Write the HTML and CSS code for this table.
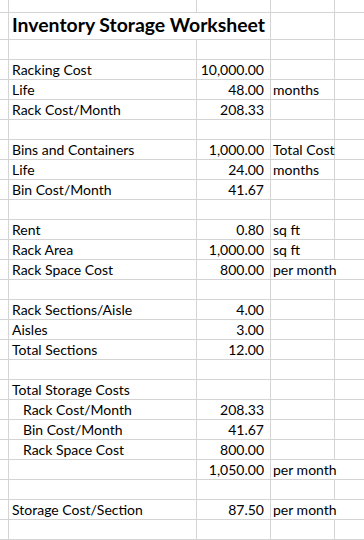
FILE: index.html
```html
<!DOCTYPE html>
<html>
<head>
<meta charset="utf-8">
<link rel="stylesheet" href="styles.css">
</head>
<body>
<div class="sheet">
  <div class="row top"><div class="c c0"></div><div class="c ca"></div><div class="c cb"></div><div class="c cc"></div><div class="c cd"></div></div>
  <div class="row title"><div class="c c0"></div><div class="c ca over"><span class="ttl">Inventory Storage Worksheet</span></div><div class="c cb"></div><div class="c cc"></div><div class="c cd"></div></div>

  <div class="row"><div class="c c0"></div><div class="c ca"></div><div class="c cb"></div><div class="c cc"></div><div class="c cd"></div></div>
  <div class="row"><div class="c c0"></div><div class="c ca">Racking Cost</div><div class="c cb">10,000.00</div><div class="c cc"></div><div class="c cd"></div></div>
  <div class="row"><div class="c c0"></div><div class="c ca">Life</div><div class="c cb">48.00</div><div class="c cc">months</div><div class="c cd"></div></div>
  <div class="row"><div class="c c0"></div><div class="c ca">Rack Cost/Month</div><div class="c cb">208.33</div><div class="c cc"></div><div class="c cd"></div></div>
  <div class="row"><div class="c c0"></div><div class="c ca"></div><div class="c cb"></div><div class="c cc"></div><div class="c cd"></div></div>

  <div class="row"><div class="c c0"></div><div class="c ca">Bins and Containers</div><div class="c cb">1,000.00</div><div class="c cc">Total Cost</div><div class="c cd"></div></div>
  <div class="row"><div class="c c0"></div><div class="c ca">Life</div><div class="c cb">24.00</div><div class="c cc">months</div><div class="c cd"></div></div>
  <div class="row"><div class="c c0"></div><div class="c ca">Bin Cost/Month</div><div class="c cb">41.67</div><div class="c cc"></div><div class="c cd"></div></div>
  <div class="row"><div class="c c0"></div><div class="c ca"></div><div class="c cb"></div><div class="c cc"></div><div class="c cd"></div></div>

  <div class="row"><div class="c c0"></div><div class="c ca">Rent</div><div class="c cb">0.80</div><div class="c cc">sq ft</div><div class="c cd"></div></div>
  <div class="row"><div class="c c0"></div><div class="c ca">Rack Area</div><div class="c cb">1,000.00</div><div class="c cc">sq ft</div><div class="c cd"></div></div>
  <div class="row"><div class="c c0"></div><div class="c ca">Rack Space Cost</div><div class="c cb">800.00</div><div class="c cc over">per month</div><div class="c cd"></div></div>
  <div class="row"><div class="c c0"></div><div class="c ca"></div><div class="c cb"></div><div class="c cc"></div><div class="c cd"></div></div>

  <div class="row"><div class="c c0"></div><div class="c ca">Rack Sections/Aisle</div><div class="c cb">4.00</div><div class="c cc"></div><div class="c cd"></div></div>
  <div class="row"><div class="c c0"></div><div class="c ca">Aisles</div><div class="c cb">3.00</div><div class="c cc"></div><div class="c cd"></div></div>
  <div class="row"><div class="c c0"></div><div class="c ca">Total Sections</div><div class="c cb">12.00</div><div class="c cc"></div><div class="c cd"></div></div>
  <div class="row"><div class="c c0"></div><div class="c ca"></div><div class="c cb"></div><div class="c cc"></div><div class="c cd"></div></div>

  <div class="row"><div class="c c0"></div><div class="c ca">Total Storage Costs</div><div class="c cb"></div><div class="c cc"></div><div class="c cd"></div></div>
  <div class="row"><div class="c c0"></div><div class="c ca ind">Rack Cost/Month</div><div class="c cb">208.33</div><div class="c cc"></div><div class="c cd"></div></div>
  <div class="row"><div class="c c0"></div><div class="c ca ind">Bin Cost/Month</div><div class="c cb">41.67</div><div class="c cc"></div><div class="c cd"></div></div>
  <div class="row"><div class="c c0"></div><div class="c ca ind">Rack Space Cost</div><div class="c cb">800.00</div><div class="c cc"></div><div class="c cd"></div></div>
  <div class="row"><div class="c c0"></div><div class="c ca"></div><div class="c cb">1,050.00</div><div class="c cc over">per month</div><div class="c cd"></div></div>
  <div class="row"><div class="c c0"></div><div class="c ca"></div><div class="c cb"></div><div class="c cc"></div><div class="c cd"></div></div>

  <div class="row"><div class="c c0"></div><div class="c ca">Storage Cost/Section</div><div class="c cb">87.50</div><div class="c cc over">per month</div><div class="c cd"></div></div>
  <div class="row"><div class="c c0"></div><div class="c ca"></div><div class="c cb"></div><div class="c cc"></div><div class="c cd"></div></div>
</div>
</body>
</html>
```

FILE: styles.css
```css
html, body {
  margin: 0;
  padding: 0;
  background: #ffffff;
}
.sheet {
  width: 364px;
  height: 540px;
  overflow: hidden;
  font-family: "Lato", "Open Sans", sans-serif;
  font-size: 14px;
  color: #000;
}
.row {
  display: flex;
  height: 20px;
  box-sizing: border-box;
  border-bottom: 1px solid #d4d4d4;
}
.row.top {
  height: 13px;
}
.row.title {
  height: 27px;
}
.c {
  box-sizing: border-box;
  height: 100%;
  border-right: 1px solid #d4d4d4;
  display: flex;
  align-items: flex-end;
  white-space: nowrap;
  line-height: 16px;
  padding-bottom: 1px;
}
.c0 { width: 9px; flex: none; }
.ca { width: 188px; flex: none; padding-left: 3px; }
.cb { width: 74px; flex: none; justify-content: flex-end; padding-right: 6px; }
.cc { width: 64px; flex: none; padding-left: 2px; }
.cd { flex: 1; border-right: none; }
.ind { padding-left: 14px; }
.over { border-right-color: transparent; overflow: visible; }
.ttl {
  font-weight: 700;
  font-size: 19.4px;
  line-height: 24px;
  padding-bottom: 1px;
}
```
